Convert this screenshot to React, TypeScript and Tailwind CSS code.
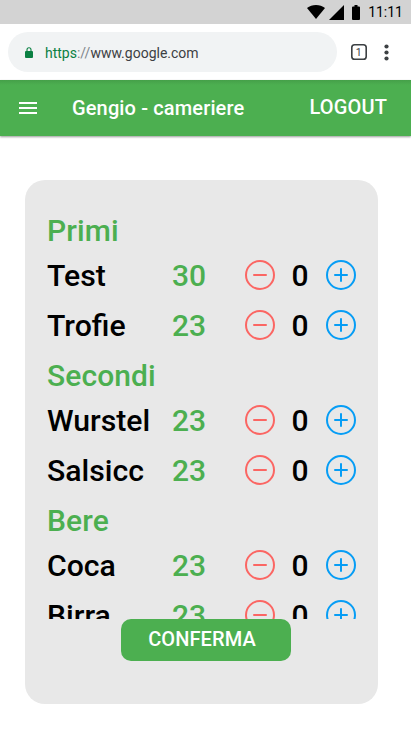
import React from "react";

type Item = { name: string; price: number; count: number };
type Section = { title: string; items: Item[] };

const menu: Section[] = [
  {
    title: "Primi",
    items: [
      { name: "Test", price: 30, count: 0 },
      { name: "Trofie", price: 23, count: 0 },
    ],
  },
  {
    title: "Secondi",
    items: [
      { name: "Wurstel", price: 23, count: 0 },
      { name: "Salsicc", price: 23, count: 0 },
    ],
  },
  {
    title: "Bere",
    items: [
      { name: "Coca", price: 23, count: 0 },
      { name: "Birra", price: 23, count: 0 },
    ],
  },
];

function StatusBar() {
  return (
    <div className="flex h-6 items-center justify-end bg-[#d3d3d3] pr-2 text-black">
      <svg width="18" height="14" viewBox="0 0 18 14" className="mr-1">
        <path d="M9 14 0 3C2.500 1 5.600 0 9 0s6.500 1 9 3z" />
      </svg>
      <svg width="15" height="15" viewBox="0 0 15 15" className="mr-2">
        <path d="M0 15 15 0v15z" />
      </svg>
      <svg width="8" height="15" viewBox="0 0 8 15" className="mr-2">
        <path d="M2.500 0h3v1.500H7a1 1 0 0 1 1 1V14a1 1 0 0 1-1 1H1a1 1 0 0 1-1-1V2.500a1 1 0 0 1 1-1h1.500z" />
      </svg>
      <span className="text-[14px] leading-6">11:11</span>
    </div>
  );
}

function AddressBar() {
  return (
    <div className="flex h-14 items-center bg-white pl-2">
      <div className="flex h-10 w-[329px] items-center rounded-full bg-[#f1f3f4] pl-[17px]">
        <svg width="8" height="11" viewBox="0 0 8 11" className="mr-3" fill="none">
          <rect x="0" y="4" width="8" height="7" rx="1" fill="#0b8043" />
          <path d="M2 4.500V2.700a2 2 0 0 1 4 0v1.800" stroke="#0b8043" strokeWidth="1.100" />
        </svg>
        <span className="pt-[2px] text-[14px] text-[#3c4043]">
          <span className="text-[#0b8043]">https</span>
          <span className="text-[#80868b]">://</span>www.google.com
        </span>
      </div>
      <svg width="16" height="16" viewBox="0 0 16 16" className="ml-[14px]">
        <rect x="0.8" y="0.8" width="14.4" height="14.4" rx="2.800" fill="none" stroke="#3c4043" strokeWidth="1.600" />
        <text x="7.8" y="11.7" textAnchor="middle" fontSize="10.500" fill="#3c4043">
          1
        </text>
      </svg>
      <svg width="5" height="17" viewBox="0 0 5 17" className="ml-[16.500px]" fill="#3c4043">
        <circle cx="2.5" cy="2.5" r="2.100" />
        <circle cx="2.5" cy="8.5" r="2.100" />
        <circle cx="2.5" cy="14.5" r="2.100" />
      </svg>
    </div>
  );
}

function AppBar() {
  return (
    <header className="flex h-14 items-center bg-[#4caf50] bg-[linear-gradient(to_bottom,#45a049,#4caf50_5px)] pr-[24px] pl-[19px] text-[20px] font-medium text-white shadow-[0_1px_2px_rgba(0,0,0,0.4)]">
      <svg width="18" height="12" viewBox="0 0 18 12" fill="white">
        <path d="M0 0h18v2H0zM0 5h18v2H0zM0 10h18v2H0z" />
      </svg>
      <h1 className="ml-[35px] flex-1 tracking-[0.14px]">Gengio - cameriere</h1>
      <button className="pb-[2px] tracking-[0.14px]">LOGOUT</button>
    </header>
  );
}

function RoundIcon({ plus = false }: { plus?: boolean }) {
  return (
    <svg
      width="30"
      height="30"
      viewBox="0 0 30 30"
      fill="none"
      stroke={plus ? "#069df5" : "#fb6663"}
      strokeWidth="2"
      strokeLinecap="round"
      className="block"
    >
      <circle cx="15" cy="15" r="14" />
      <path d={plus ? "M9 15h12M15 9v12" : "M9 15h12"} />
    </svg>
  );
}

function MenuRow({ item }: { item: Item }) {
  return (
    <div className="flex h-[50px] items-center">
      <span className="w-[125px] pt-[2px] text-[30.200px]">{item.name}</span>
      <span className="w-[73px] pt-[2px] text-[#4caf50]">{item.price}</span>
      <button aria-label="-1">
        <RoundIcon />
      </button>
      <span className="w-[51px] pt-[2px] pr-px text-center">{item.count}</span>
      <button aria-label="+1">
        <RoundIcon plus />
      </button>
    </div>
  );
}

export default function App() {
  return (
    <div className="flex h-[731px] w-[411px] flex-col overflow-hidden bg-white font-['Roboto',sans-serif]">
      <StatusBar />
      <AddressBar />
      <AppBar />
      <main className="mt-11 ml-[25px] flex h-[524px] w-[353px] flex-col rounded-[20px] bg-[#e8e8e8] pt-[30px]">
        <div className="h-[409px] overflow-hidden pl-[22px] text-[30px] leading-10 font-medium text-black">
          {menu.map((section) => (
            <section key={section.title} className="mb-[5px]">
              <h2 className="h-10 pt-px tracking-[0.1px] text-[#4caf50]">{section.title}</h2>
              {section.items.map((item) => (
                <MenuRow key={item.name} item={item} />
              ))}
            </section>
          ))}
        </div>
        <button className="ml-24 h-[42px] w-[170px] rounded-[10px] bg-[#4caf50] pr-[8px] pb-[2px] text-[20px] font-medium tracking-[0.1px] text-white">
          CONFERMA
        </button>
      </main>
    </div>
  );
}
